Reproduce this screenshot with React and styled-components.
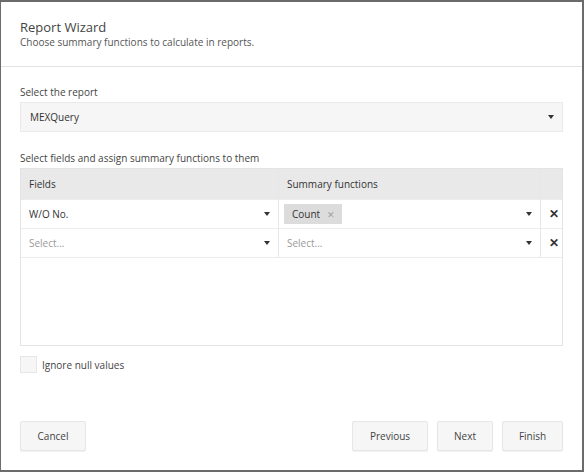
import React from "react";
import styled, { createGlobalStyle } from "styled-components";

const Global = createGlobalStyle`
  html, body { margin: 0; padding: 0; background: #fff; }
  body { font-family: "Open Sans", "Noto Sans", sans-serif; color: #333; }
  * { box-sizing: border-box; }
`;

const Frame = styled.div`
  width: 584px;
  height: 472px;
  border: 2px solid #6b6b6b;
  border-left-width: 1px;
  display: flex;
  flex-direction: column;
  background: #fff;
`;

const Header = styled.div`
  padding: 16px 19px 0;
  height: 65px;
  border-bottom: 1px solid #e3e3e3;
`;

const Title = styled.div`
  font-size: 13px;
  color: #444;
  line-height: 18px;
`;

const Subtitle = styled.div`
  font-size: 10px;
  color: #555;
  line-height: 13px;
`;

const Body = styled.div`
  flex: 1;
  padding: 18px 19px 0;
  display: flex;
  flex-direction: column;
`;

const Label = styled.div`
  font-size: 10px;
  color: #444;
  line-height: 14px;
  margin-bottom: 3px;
  margin-top: ${(p) => p.$top || 0}px;
`;

const SelectBox = styled.div`
  height: 30px;
  background: #f6f6f6;
  border: 1px solid #eaeaea;
  display: flex;
  align-items: center;
  padding: 0 8px 0 9px;
  font-size: 10px;
  color: #333;
`;

const Grow = styled.span`
  flex: 1;
`;

const Caret = styled.span`
  width: 0;
  height: 0;
  border-left: 3px solid transparent;
  border-right: 3px solid transparent;
  border-top: 4px solid #333;
  margin-left: 6px;
`;

const Table = styled.div`
  border: 1px solid #e3e3e3;
  height: 178px;
  display: flex;
  flex-direction: column;
`;

const Row = styled.div`
  display: grid;
  grid-template-columns: 258px 262px 1fr;
  height: ${(p) => (p.$head ? 31 : 29)}px;
  background: ${(p) => (p.$head ? "#e9e9e9" : "#fff")};
  border-bottom: 1px solid #ececec;
`;

const Cell = styled.div`
  display: flex;
  align-items: center;
  padding: 0 8px;
  font-size: 10px;
  color: ${(p) => (p.$placeholder ? "#9a9a9a" : "#333")};
  border-right: ${(p) => (p.$last ? "none" : "1px solid #e6e6e6")};
  justify-content: ${(p) => (p.$center ? "center" : "flex-start")};
`;

const Chip = styled.span`
  background: #dcdcdc;
  height: 20px;
  display: inline-flex;
  align-items: center;
  padding: 0 7px 0 8px;
  margin-left: -3px;
  font-size: 10px;
  color: #333;
  gap: 7px;
`;

const ChipX = styled.span`
  color: #a0a0a0;
  font-size: 9px;
`;

const Remove = styled.span`
  font-size: 12px;
  font-weight: 700;
  color: #333;
  line-height: 1;
`;

const CheckRow = styled.label`
  display: flex;
  align-items: center;
  gap: 5px;
  margin-top: 10px;
  font-size: 10px;
  color: #444;
`;

const Box = styled.span`
  width: 17px;
  height: 17px;
  background: #f6f6f6;
  border: 1px solid #e6e6e6;
`;

const Footer = styled.div`
  display: flex;
  align-items: center;
  padding: 0 19px 19px;
  gap: 9px;
`;

const Button = styled.button`
  height: 30px;
  padding: 0;
  width: ${(p) => p.$w}px;
  background: #f6f6f6;
  border: 1px solid #e6e6e6;
  border-radius: 2px;
  box-shadow: 0 1px 1px rgba(0, 0, 0, 0.06);
  font-family: inherit;
  font-size: 10px;
  color: #444;
`;

const Spacer = styled.div`
  flex: 1;
`;

export default function App() {
  return (
    <>
      <Global />
      <Frame>
        <Header>
          <Title>Report Wizard</Title>
          <Subtitle>Choose summary functions to calculate in reports.</Subtitle>
        </Header>
        <Body>
          <Label>Select the report</Label>
          <SelectBox>
            <Grow>MEXQuery</Grow>
            <Caret />
          </SelectBox>
          <Label $top={19}>Select fields and assign summary functions to them</Label>
          <Table>
            <Row $head>
              <Cell>Fields</Cell>
              <Cell>Summary functions</Cell>
              <Cell $last />
            </Row>
            <Row>
              <Cell>
                <Grow>W/O No.</Grow>
                <Caret />
              </Cell>
              <Cell>
                <Grow>
                  <Chip>
                    Count <ChipX>✕</ChipX>
                  </Chip>
                </Grow>
                <Caret />
              </Cell>
              <Cell $last $center>
                <Remove>✕</Remove>
              </Cell>
            </Row>
            <Row>
              <Cell $placeholder>
                <Grow>Select...</Grow>
                <Caret />
              </Cell>
              <Cell $placeholder>
                <Grow>Select...</Grow>
                <Caret />
              </Cell>
              <Cell $last $center>
                <Remove>✕</Remove>
              </Cell>
            </Row>
          </Table>
          <CheckRow>
            <Box />
            Ignore null values
          </CheckRow>
        </Body>
        <Footer>
          <Button $w={66}>Cancel</Button>
          <Spacer />
          <Button $w={76}>Previous</Button>
          <Button $w={56}>Next</Button>
          <Button $w={61}>Finish</Button>
        </Footer>
      </Frame>
    </>
  );
}
